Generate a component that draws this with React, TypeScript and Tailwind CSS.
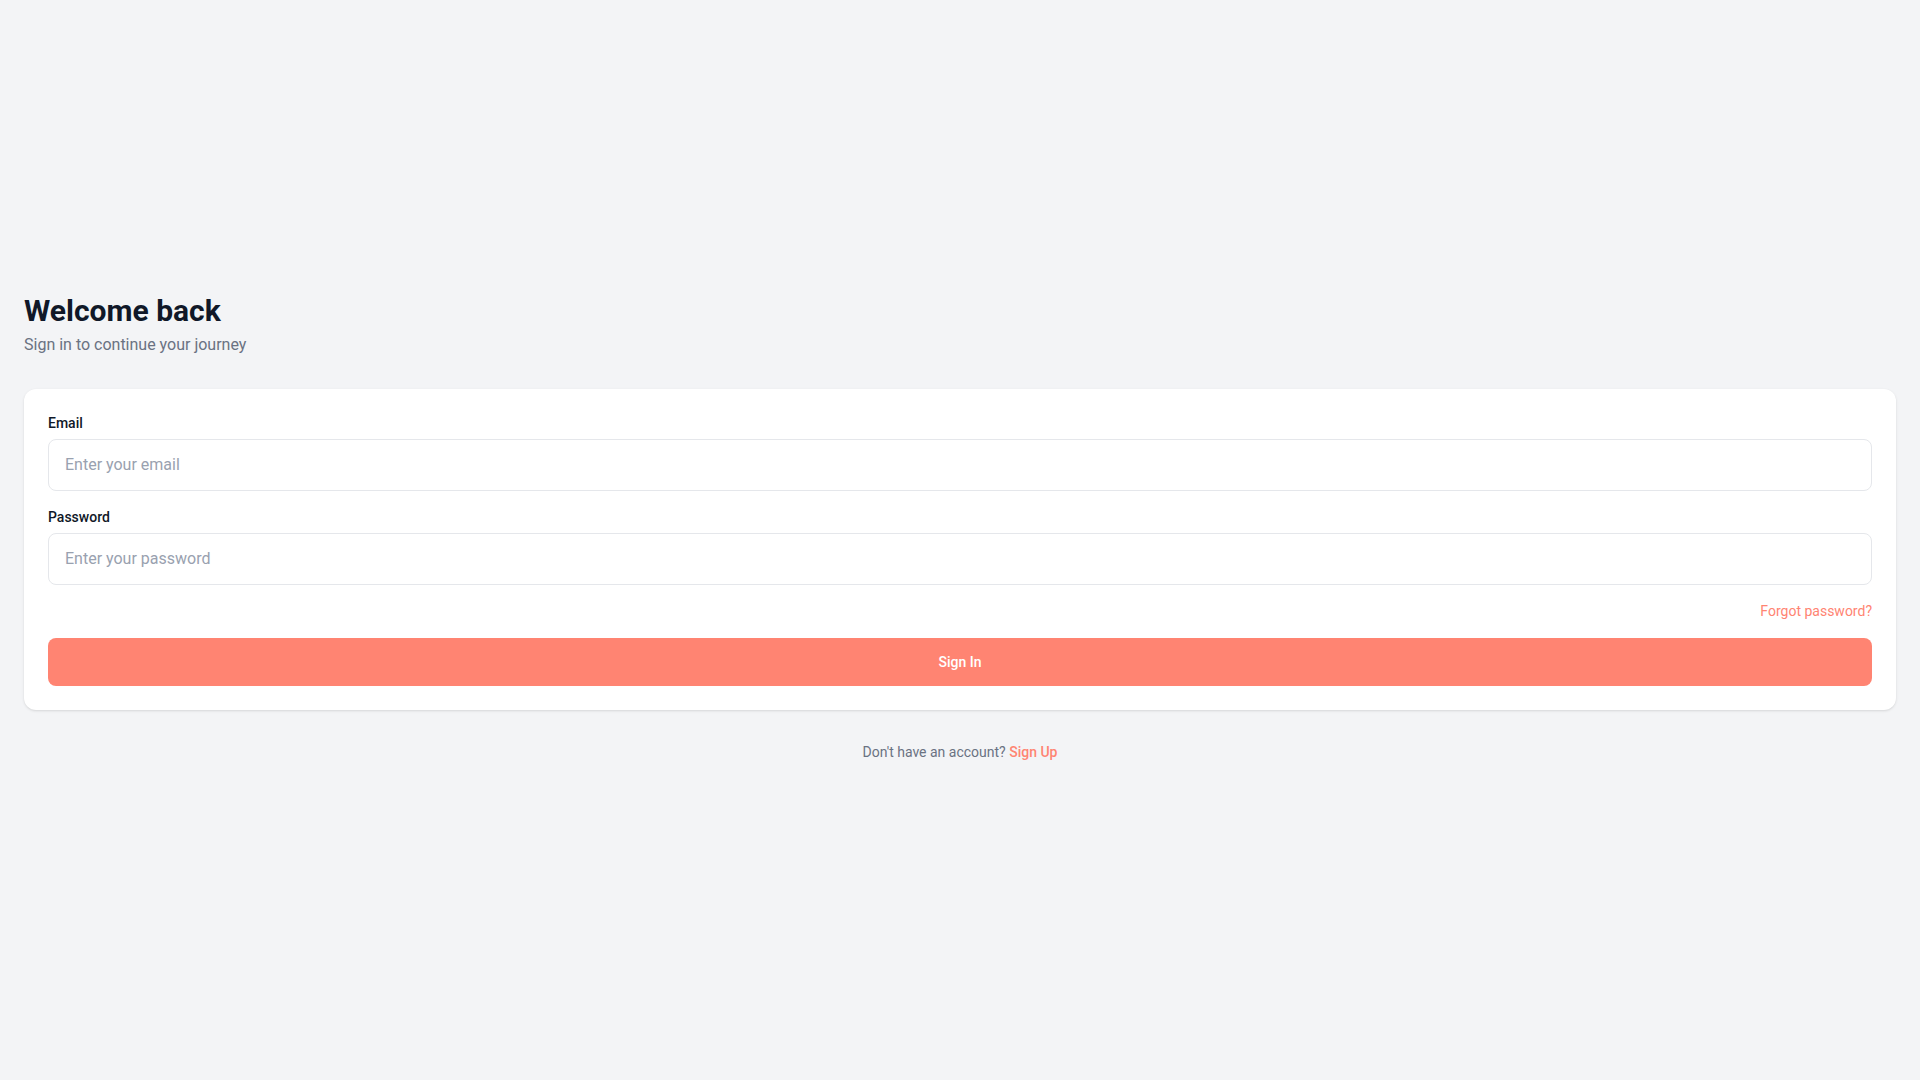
import React from "react";

export default function App() {
  return (
    <div className="min-h-screen bg-[#f3f4f6] font-['Roboto',sans-serif] flex flex-col justify-center px-6 pb-[26px]">
      <div className="mb-8">
        <h1 className="text-3xl font-bold text-gray-900">Welcome back</h1>
        <p className="mt-1 text-base text-gray-500">Sign in to continue your journey</p>
      </div>
      <div className="bg-white rounded-xl shadow-sm p-6 flex flex-col gap-4">
        <div>
          <label className="block mb-1.5 text-sm font-medium text-gray-900">Email</label>
          <input
            type="email"
            placeholder="Enter your email"
            className="w-full h-[52px] px-4 rounded-lg border border-gray-200 text-base text-gray-900 placeholder:text-gray-400 outline-none"
          />
        </div>
        <div>
          <label className="block mb-1.5 text-sm font-medium text-gray-900">Password</label>
          <input
            type="password"
            placeholder="Enter your password"
            className="w-full h-[52px] px-4 rounded-lg border border-gray-200 text-base text-gray-900 placeholder:text-gray-400 outline-none"
          />
        </div>
        <div className="flex justify-end mb-px">
          <a href="#" className="text-sm text-[#ff8472]">Forgot password?</a>
        </div>
        <button className="w-full h-12 rounded-lg bg-[#ff8472] text-white text-sm font-medium">Sign In</button>
      </div>
      <p className="mt-8 text-center text-sm text-gray-500">
        Don't have an account? <a href="#" className="font-medium text-[#ff8472]">Sign Up</a>
      </p>
    </div>
  );
}
